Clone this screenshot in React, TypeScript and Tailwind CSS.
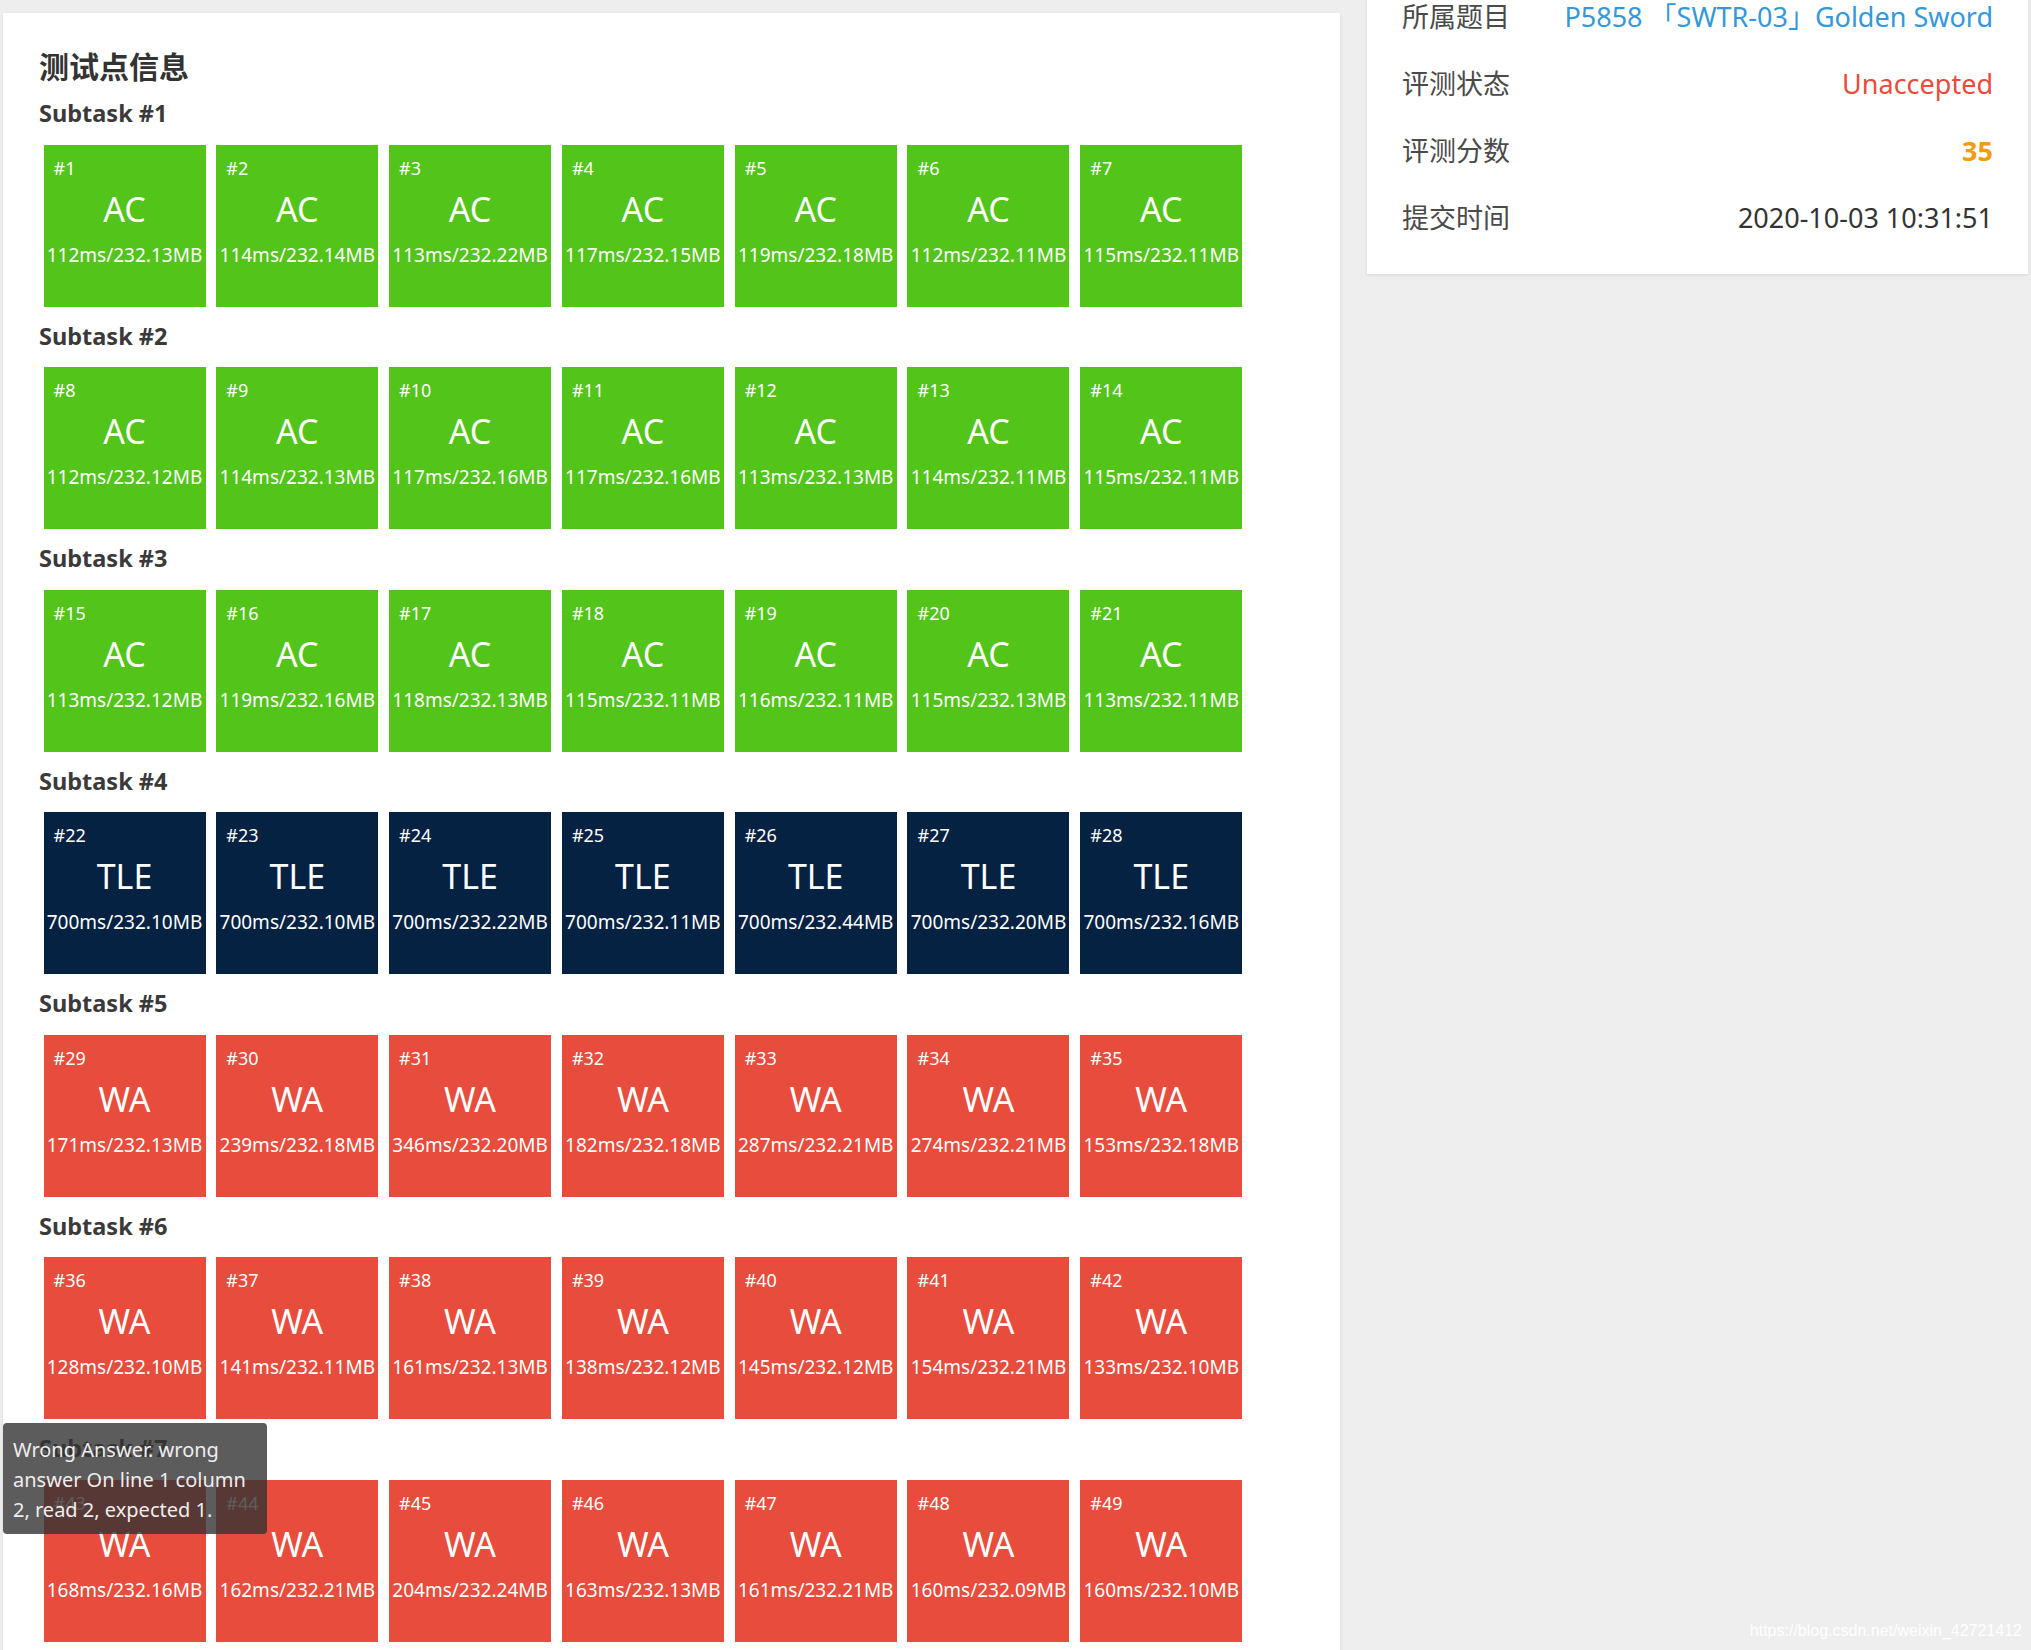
import React from 'react';

type Verdict = 'AC' | 'TLE' | 'WA';

interface Subtask {
  verdict: Verdict;
  stats: string[];
}

const subtasks: Subtask[] = [
  {
    verdict: 'AC',
    stats: ['112ms/232.13MB', '114ms/232.14MB', '113ms/232.22MB', '117ms/232.15MB', '119ms/232.18MB', '112ms/232.11MB', '115ms/232.11MB'],
  },
  {
    verdict: 'AC',
    stats: ['112ms/232.12MB', '114ms/232.13MB', '117ms/232.16MB', '117ms/232.16MB', '113ms/232.13MB', '114ms/232.11MB', '115ms/232.11MB'],
  },
  {
    verdict: 'AC',
    stats: ['113ms/232.12MB', '119ms/232.16MB', '118ms/232.13MB', '115ms/232.11MB', '116ms/232.11MB', '115ms/232.13MB', '113ms/232.11MB'],
  },
  {
    verdict: 'TLE',
    stats: ['700ms/232.10MB', '700ms/232.10MB', '700ms/232.22MB', '700ms/232.11MB', '700ms/232.44MB', '700ms/232.20MB', '700ms/232.16MB'],
  },
  {
    verdict: 'WA',
    stats: ['171ms/232.13MB', '239ms/232.18MB', '346ms/232.20MB', '182ms/232.18MB', '287ms/232.21MB', '274ms/232.21MB', '153ms/232.18MB'],
  },
  {
    verdict: 'WA',
    stats: ['128ms/232.10MB', '141ms/232.11MB', '161ms/232.13MB', '138ms/232.12MB', '145ms/232.12MB', '154ms/232.21MB', '133ms/232.10MB'],
  },
  {
    verdict: 'WA',
    stats: ['168ms/232.16MB', '162ms/232.21MB', '204ms/232.24MB', '163ms/232.13MB', '161ms/232.21MB', '160ms/232.09MB', '160ms/232.10MB'],
  },
];

const tileColor: Record<Verdict, string> = {
  AC: 'bg-[#52c41a]',
  TLE: 'bg-[#052242]',
  WA: 'bg-[#e74c3c]',
};

function CaseTile({ id, verdict, stat }: { id: number; verdict: Verdict; stat: string }) {
  return (
    <div className={`w-[162px] h-[162px] shrink-0 text-white ${tileColor[verdict]}`}>
      <div className="pl-[10px] pt-[11px] text-[18px] leading-[24px]">#{id}</div>
      <div className="text-center text-[34px] leading-[58px]">{verdict}</div>
      <div className="text-center text-[19px] leading-[34px] whitespace-nowrap">{stat}</div>
    </div>
  );
}

function InfoRow({ label, children }: { label: string; children: React.ReactNode }) {
  return (
    <div className="h-[67px] flex items-center justify-between text-[27px]">
      <span className="text-[#4a4a4a]">{label}</span>
      {children}
    </div>
  );
}

export default function App() {
  let caseId = 0;

  return (
    <div className="relative h-[1650px] overflow-hidden bg-[#eeeeee] font-['Noto_Sans','Noto_Sans_CJK_SC',sans-serif]">
      <div className="flex items-start gap-[27px] pl-[3px]">
        {/* test case panel */}
        <div className="relative mt-[13px] w-[1337px] shrink-0 bg-white pl-[36px] pt-[34px] pb-[60px] shadow-[0_1px_3px_rgba(0,0,0,0.1)]">
          <h2 className="text-[30px] leading-[40px] font-bold text-[#333]">测试点信息</h2>
          <div className="mt-[11px]">
            {subtasks.map((st, i) => (
              <div key={i}>
                <div className="text-[23.5px] leading-[31.5px] font-bold text-[#3a3a3a]">Subtask #{i + 1}</div>
                <div className="mt-[15px] mb-[14px] ml-[4.5px] flex gap-[10.8px]">
                  {st.stats.map((s) => {
                    caseId += 1;
                    return <CaseTile key={caseId} id={caseId} verdict={st.verdict} stat={s} />;
                  })}
                </div>
              </div>
            ))}
          </div>

          {/* hover tooltip */}
          <div className="absolute left-0 top-[1410px] w-[264px] h-[111px] rounded-[4px] bg-[rgba(51,51,51,0.8)] px-[10px] pt-[12px] text-[20px] leading-[30px] text-[#eeeeee] whitespace-nowrap">
            Wrong Answer. wrong
            <br />
            answer On line 1 column
            <br />
            2, read 2, expected 1.
          </div>
        </div>

        {/* record summary */}
        <div className="mt-[-38.5px] w-[661px] shrink-0 bg-white px-[35px] pt-[22px] pb-[22px] shadow-[0_1px_3px_rgba(0,0,0,0.1)]">
          <InfoRow label="所属题目">
            <span className="text-[#3498db]">P5858 「SWTR-03」Golden Sword</span>
          </InfoRow>
          <InfoRow label="评测状态">
            <span className="text-[#e74c3c]">Unaccepted</span>
          </InfoRow>
          <InfoRow label="评测分数">
            <span className="font-bold text-[#f39c12]">35</span>
          </InfoRow>
          <InfoRow label="提交时间">
            <span className="text-[#333]">2020-10-03 10:31:51</span>
          </InfoRow>
        </div>
      </div>

      <div className="absolute right-[9px] bottom-[8px] font-['Liberation_Sans',sans-serif] text-[16px] leading-[22px] text-white">
        https://blog.csdn.net/weixin_42721412
      </div>
    </div>
  );
}
